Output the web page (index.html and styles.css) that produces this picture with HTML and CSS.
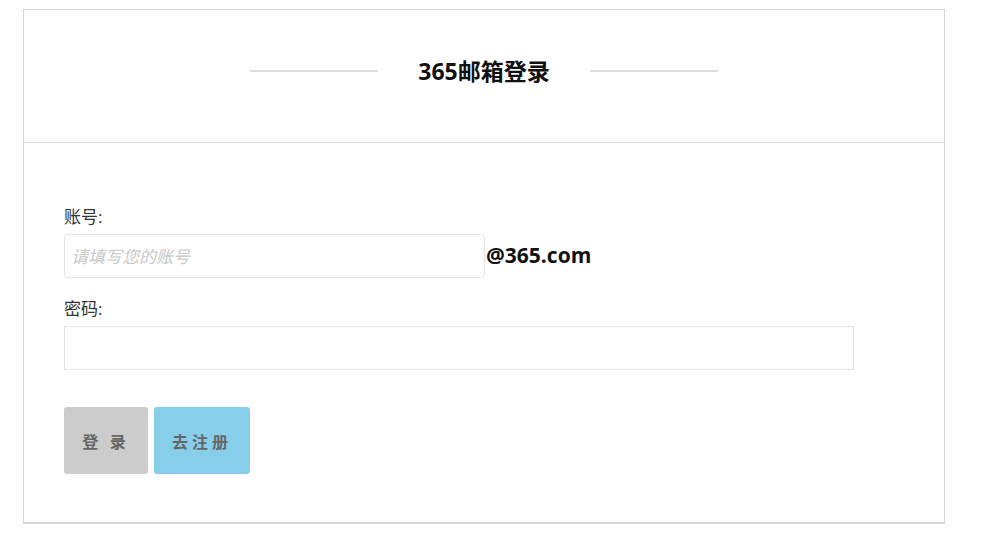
FILE: index.html
```html
<!DOCTYPE html>
<html lang="zh-CN">
<head>
  <meta charset="UTF-8" />
  <meta name="viewport" content="width=device-width, initial-scale=1.0"/>
  <title>365邮箱登录</title>
  <link rel="stylesheet" href="styles.css">
</head>
<body>

  <div class="login-box">
    <div class="login-head">
      <span class="head-line"></span>
      <h2>365邮箱登录</h2>
      <span class="head-line"></span>
    </div>

    <form class="login-form">
      <label>账号:</label>
      <div class="account-row">
        <input type="text" class="account-input" placeholder="请填写您的账号" />
        <span class="suffix">@365.com</span>
      </div>
      <label>密码:</label>
      <input type="password" class="pwd-input" />
      <div class="btn-row">
        <button type="submit" class="btn btn-login">登&nbsp;录</button>
        <button type="button" class="btn btn-reg">去注册</button>
      </div>
    </form>
  </div>

</body>
</html>
```

FILE: styles.css
```css
body {
  margin: 0;
  background: #fff;
  font-family: "Open Sans", "Noto Sans CJK SC", sans-serif;
  color: #222;
}
.login-box {
  width: 920px;
  margin: 9px 0 0 23px;
  border: 1px solid #d6d6d6;
  border-bottom-width: 2px;
  background: #fff;
}
.login-head {
  box-sizing: border-box;
  height: 133px;
  padding-bottom: 10px;
  border-bottom: 1px solid #dcdcdc;
  display: flex;
  align-items: center;
  justify-content: center;
  gap: 40px;
}
.login-head h2 {
  margin: 0;
  font-size: 23px;
  line-height: 1;
  font-weight: bold;
  color: #111;
}
.head-line {
  width: 128px;
  height: 2px;
  background: #ddd;
}
.login-form {
  padding: 62px 40px 48px 40px;
}
label {
  display: block;
  font-size: 17px;
  line-height: 24px;
  color: #333;
  margin-bottom: 5px;
}
.account-row {
  display: flex;
  align-items: center;
  margin-bottom: 19px;
}
input {
  box-sizing: border-box;
  height: 44px;
  padding: 0 6px;
  border: 1px solid #e3e3e3;
  font-size: 17px;
  font-family: "Open Sans", "Noto Sans CJK SC", sans-serif;
  outline: none;
}
.account-input {
  width: 421px;
  border-radius: 4px;
}
.account-input::placeholder {
  color: #c8c8c8;
  font-style: italic;
}
.suffix {
  margin: 0 0 3px 1px;
  font-size: 21px;
  font-weight: bold;
  color: #111;
}
.pwd-input {
  display: block;
  width: 790px;
}
.btn-row {
  display: flex;
  gap: 6px;
  margin-top: 37px;
}
.btn {
  height: 67px;
  border: none;
  border-radius: 3px;
  font-size: 16px;
  font-weight: bold;
  color: #666;
  letter-spacing: 4px;
  font-family: "Noto Sans CJK SC", sans-serif;
  cursor: pointer;
}
.btn-login {
  width: 84px;
  background: #cccccc;
}
.btn-reg {
  width: 96px;
  background: #87ceeb;
}
```
